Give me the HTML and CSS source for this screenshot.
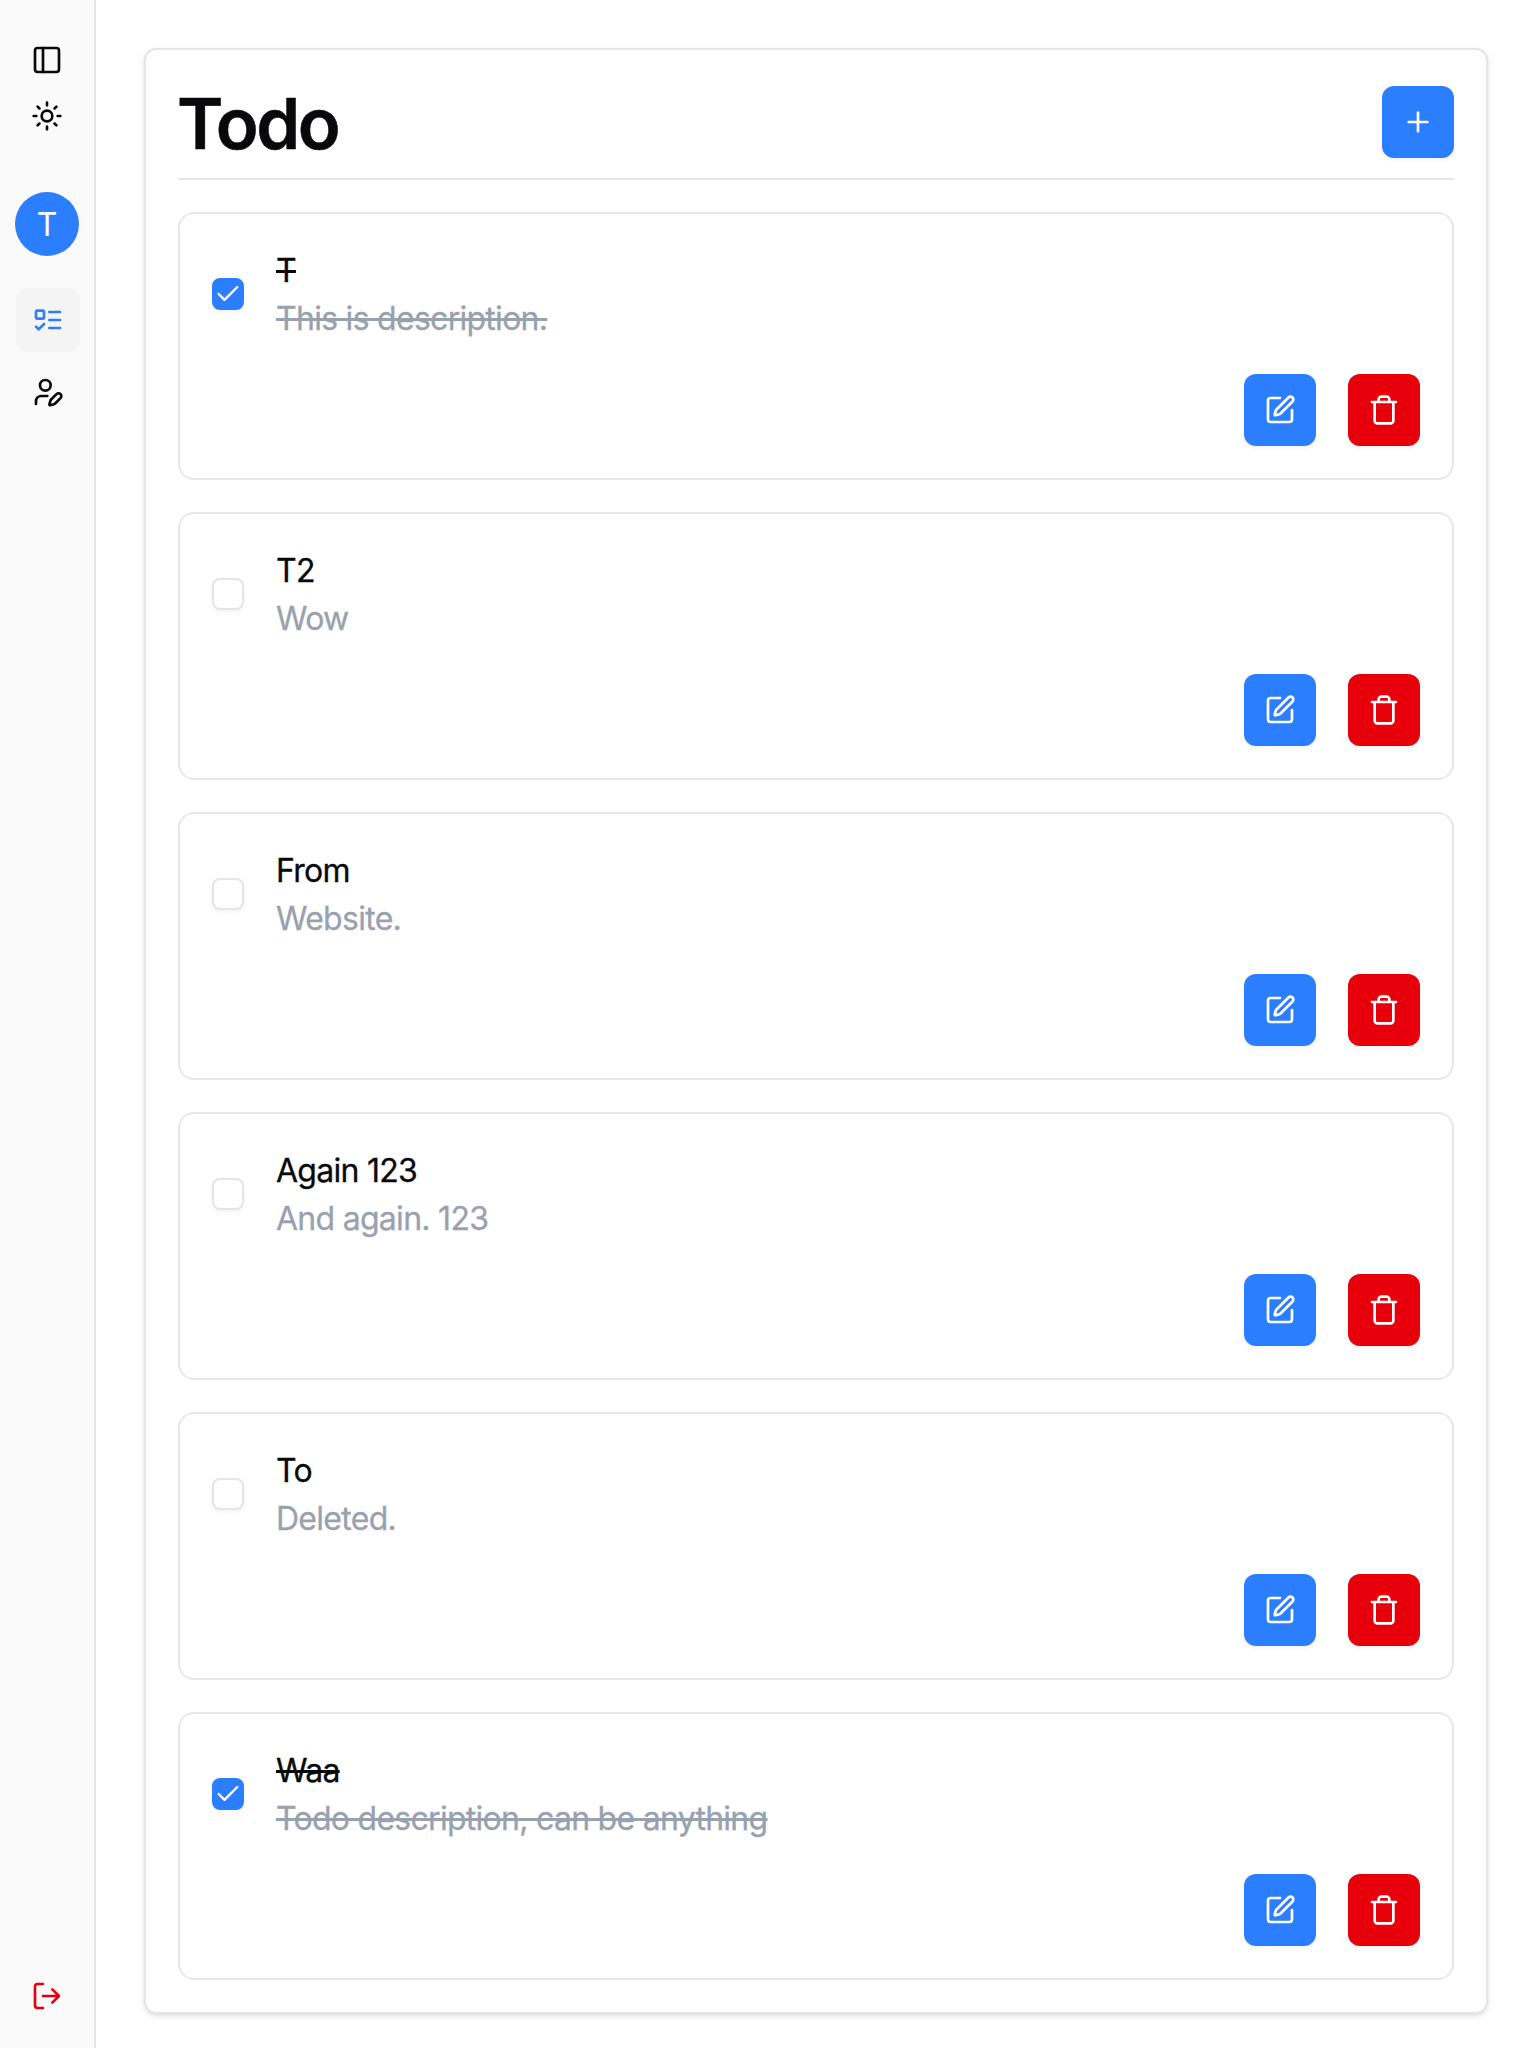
FILE: index.html
```html
<!DOCTYPE html>
<html lang="en">
<head>
<meta charset="utf-8">
<title>Todo</title>
<link rel="stylesheet" href="styles.css">
</head>
<body>
<svg class="sprite" aria-hidden="true">
  <symbol id="panel" viewBox="0 0 24 24"><rect width="18" height="18" x="3" y="3" rx="2"/><path d="M9 3v18"/></symbol>
  <symbol id="sun" viewBox="0 0 24 24"><circle cx="12" cy="12" r="4"/><path d="M12 2v2M12 20v2M4.93 4.93l1.41 1.41M17.66 17.66l1.41 1.41M2 12h2M20 12h2M6.34 17.66l-1.41 1.41M19.07 4.93l-1.41 1.41"/></symbol>
  <symbol id="list" viewBox="0 0 24 24"><rect x="3" y="5" width="6" height="6" rx="1"/><path d="m3 17 2 2 4-4M13 6h8M13 12h8M13 18h8"/></symbol>
  <symbol id="user" viewBox="0 0 24 24"><path d="M11.5 15H7a4 4 0 0 0-4 4v2"/><path d="M21.378 16.626a1 1 0 0 0-3.004-3.004l-4.01 4.012a2 2 0 0 0-.506.854l-.837 2.87a.5.5 0 0 0 .62.62l2.87-.837a2 2 0 0 0 .854-.506z"/><circle cx="10" cy="7" r="4"/></symbol>
  <symbol id="logout" viewBox="0 0 24 24"><path d="M9 21H5a2 2 0 0 1-2-2V5a2 2 0 0 1 2-2h4M16 17l5-5-5-5M21 12H9"/></symbol>
  <symbol id="plus" viewBox="0 0 24 24"><path d="M5 12h14M12 5v14"/></symbol>
  <symbol id="check" viewBox="0 0 24 24"><path d="M20 6 9 17l-5-5"/></symbol>
  <symbol id="edit" viewBox="0 0 24 24"><path d="M12 3H5a2 2 0 0 0-2 2v14a2 2 0 0 0 2 2h14a2 2 0 0 0 2-2v-7"/><path d="M18.375 2.625a1 1 0 0 1 3 3l-9.013 9.014a2 2 0 0 1-.853.505l-2.873.84a.5.5 0 0 1-.62-.62l.84-2.873a2 2 0 0 1 .506-.852z"/></symbol>
  <symbol id="trash" viewBox="0 0 24 24"><path d="M3 6h18M19 6v14c0 1-1 2-2 2H7c-1 0-2-1-2-2V6M8 6V4c0-1 1-2 2-2h4c1 0 2 1 2 2v2"/></symbol>
</svg>
<div class="app">
  <nav class="sidebar">
    <div class="tools">
      <svg class="icon"><use href="#panel"/></svg>
      <svg class="icon"><use href="#sun"/></svg>
    </div>
    <div class="avatar">T</div>
    <div class="links">
      <a class="link active"><svg class="icon"><use href="#list"/></svg></a>
      <a class="link"><svg class="icon"><use href="#user"/></svg></a>
    </div>
    <svg class="icon logout"><use href="#logout"/></svg>
  </nav>
  <main class="main">
    <section class="panel">
      <header class="header">
        <h1 class="title">Todo</h1>
        <button class="btn"><svg class="icon"><use href="#plus"/></svg></button>
      </header>
      <div class="list">
        <article class="card done">
          <div class="body"><span class="box"><svg class="tick"><use href="#check"/></svg></span><div class="text"><p class="name">T</p><p class="desc">This is description.</p></div></div>
          <div class="actions"><button class="btn"><svg class="icon"><use href="#edit"/></svg></button><button class="btn danger"><svg class="icon"><use href="#trash"/></svg></button></div>
        </article>
        <article class="card">
          <div class="body"><span class="box"></span><div class="text"><p class="name">T2</p><p class="desc">Wow</p></div></div>
          <div class="actions"><button class="btn"><svg class="icon"><use href="#edit"/></svg></button><button class="btn danger"><svg class="icon"><use href="#trash"/></svg></button></div>
        </article>
        <article class="card">
          <div class="body"><span class="box"></span><div class="text"><p class="name">From</p><p class="desc">Website.</p></div></div>
          <div class="actions"><button class="btn"><svg class="icon"><use href="#edit"/></svg></button><button class="btn danger"><svg class="icon"><use href="#trash"/></svg></button></div>
        </article>
        <article class="card">
          <div class="body"><span class="box"></span><div class="text"><p class="name">Again 123</p><p class="desc">And again. 123</p></div></div>
          <div class="actions"><button class="btn"><svg class="icon"><use href="#edit"/></svg></button><button class="btn danger"><svg class="icon"><use href="#trash"/></svg></button></div>
        </article>
        <article class="card">
          <div class="body"><span class="box"></span><div class="text"><p class="name">To</p><p class="desc">Deleted.</p></div></div>
          <div class="actions"><button class="btn"><svg class="icon"><use href="#edit"/></svg></button><button class="btn danger"><svg class="icon"><use href="#trash"/></svg></button></div>
        </article>
        <article class="card done">
          <div class="body"><span class="box"><svg class="tick"><use href="#check"/></svg></span><div class="text"><p class="name">Waa</p><p class="desc">Todo description, can be anything</p></div></div>
          <div class="actions"><button class="btn"><svg class="icon"><use href="#edit"/></svg></button><button class="btn danger"><svg class="icon"><use href="#trash"/></svg></button></div>
        </article>
      </div>
    </section>
  </main>
</div>
</body>
</html>
```
FILE: styles.css
```css
* { box-sizing: border-box; margin: 0; padding: 0; }
body {
  font-family: Inter, "Liberation Sans", sans-serif;
  font-size: 32px;
  line-height: 48px;
  color: #09090b;
  background: #fff;
}
.sprite { display: none; }
.icon, .tick {
  display: block;
  width: 32px;
  height: 32px;
  fill: none;
  stroke: currentColor;
  stroke-width: 2;
  stroke-linecap: round;
  stroke-linejoin: round;
}
.app { display: flex; height: 2048px; }
.sidebar {
  display: flex;
  flex-direction: column;
  align-items: center;
  width: 96px;
  padding: 44px 0 36px;
  background: #fafafa;
  border-right: 2px solid #e5e5e5;
}
.tools { display: flex; flex-direction: column; gap: 24px; }
.avatar {
  width: 64px;
  height: 64px;
  margin-top: 60px;
  border-radius: 50%;
  background: #2b7fff;
  color: #fff;
  line-height: 66px;
  text-align: center;
}
.links {
  display: flex;
  flex-direction: column;
  gap: 8px;
  margin: 32px 0 0 2px;
}
.link {
  display: grid;
  place-items: center;
  width: 64px;
  height: 64px;
  border-radius: 12px;
}
.link.active { background: #f4f4f4; color: #2b7fff; }
.logout { margin-top: auto; color: #e7000b; }
.main { flex: 1; padding: 48px 48px 34px; }
.panel {
  height: 1966px;
  padding: 36px 32px 32px;
  border: 2px solid #e5e5e5;
  border-radius: 12px;
  box-shadow: 0 2px 6px rgba(0, 0, 0, .1), 0 2px 4px -2px rgba(0, 0, 0, .1);
}
.header {
  display: flex;
  justify-content: space-between;
  align-items: center;
  height: 94px;
  padding-bottom: 20px;
  border-bottom: 2px solid #e5e5e5;
}
.title {
  margin-left: -1px;
  padding-top: 3px;
  font-size: 70.5px;
  line-height: 72px;
  font-weight: 600;
  letter-spacing: -2.4px;
  -webkit-text-stroke: .5px currentColor;
}
.btn {
  display: grid;
  place-items: center;
  width: 72px;
  height: 72px;
  border: 0;
  border-radius: 12px;
  background: #2b7fff;
  color: #fff;
  box-shadow: 0 2px 4px rgba(0, 0, 0, .05);
}
.btn.danger { background: #e7000b; }
.list { display: flex; flex-direction: column; gap: 32px; margin-top: 32px; }
.card {
  display: flex;
  flex-direction: column;
  justify-content: space-between;
  height: 268px;
  padding: 32px;
  border: 2px solid #e5e7eb;
  border-radius: 16px;
}
.body { display: flex; align-items: center; gap: 32px; height: 96px; }
.box {
  display: grid;
  place-items: center;
  width: 32px;
  height: 32px;
  border: 2px solid #e5e5e5;
  border-radius: 8px;
  box-shadow: 0 2px 4px rgba(0, 0, 0, .05);
}
.tick { width: 28px; height: 28px; }
.text {
  padding-top: 2px;
  letter-spacing: -.72px;
  -webkit-text-stroke: .3px currentColor;
}
.desc { color: #99a1af; }
.done .box { background: #2b7fff; border-color: #2b7fff; color: #fff; }
.done p { width: fit-content; text-decoration: line-through 3px; }
.actions { display: flex; justify-content: flex-end; gap: 32px; }
```
